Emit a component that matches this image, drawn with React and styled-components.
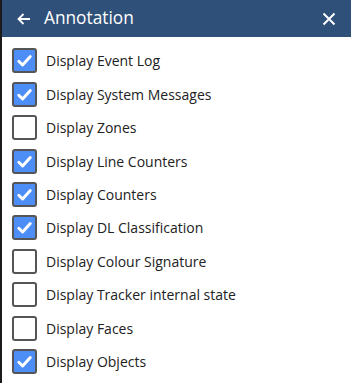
import React from 'react';
import styled, { createGlobalStyle } from 'styled-components';

const GlobalStyle = createGlobalStyle`
  html, body { margin: 0; padding: 0; background: #fff; }
  body { font-family: "Open Sans", "Noto Sans", sans-serif; }
`;

const Panel = styled.div`
  width: 351px;
  height: 383px;
  box-sizing: border-box;
  border-left: 2px solid #1b1b1b;
  background: #fff;
  display: flex;
  flex-direction: column;
`;

const Header = styled.div`
  height: 37px;
  background: #2f5079;
  display: flex;
  align-items: center;
  padding: 0 12px 0 12px;
  color: #fff;
`;

const Title = styled.div`
  flex: 1;
  font-size: 17.3px;
  margin-left: 10px;
  margin-top: -2px;
`;

const IconButton = styled.div`
  display: flex;
  align-items: center;
  justify-content: center;
  width: 20px;
  height: 20px;
`;

const List = styled.div`
  display: flex;
  flex-direction: column;
  padding: 7px 0 0 10px;
`;

const Row = styled.label`
  height: 33.45px;
  display: flex;
  align-items: center;
  gap: 9px;
  font-size: 14px;
  color: #222;
`;

const Box = styled.div`
  width: 21px;
  height: 21px;
  border: 2px solid #555;
  border-radius: 3px;
  background: ${p => (p.checked ? '#4d8ef6' : '#fff')};
  display: flex;
  align-items: center;
  justify-content: center;
`;

const items = [
  ['Display Event Log', true],
  ['Display System Messages', true],
  ['Display Zones', false],
  ['Display Line Counters', true],
  ['Display Counters', true],
  ['Display DL Classification', true],
  ['Display Colour Signature', false],
  ['Display Tracker internal state', false],
  ['Display Faces', false],
  ['Display Objects', true],
];

const Check = () => (
  <svg width="17" height="17" viewBox="0 0 17 17">
    <path d="M2.8 9.2 L6.6 13 L14.3 4.5" fill="none" stroke="#fff" strokeWidth="2.9" strokeLinecap="round" strokeLinejoin="round" />
  </svg>
);

const App = () => (
  <>
    <GlobalStyle />
    <Panel>
      <Header>
        <IconButton>
          <svg width="16" height="16" viewBox="0 0 16 16">
            <path d="M14 8 H2.5 M7.5 3 L2.5 8 L7.5 13" fill="none" stroke="#fff" strokeWidth="1.8" />
          </svg>
        </IconButton>
        <Title>Annotation</Title>
        <IconButton>
          <svg width="14" height="14" viewBox="0 0 14 14">
            <path d="M1.5 1.5 L12.5 12.5 M12.5 1.5 L1.5 12.5" fill="none" stroke="#fff" strokeWidth="2" />
          </svg>
        </IconButton>
      </Header>
      <List>
        {items.map(([label, checked]) => (
          <Row key={label}>
            <Box checked={checked}>{checked && <Check />}</Box>
            {label}
          </Row>
        ))}
      </List>
    </Panel>
  </>
);

export default App;
